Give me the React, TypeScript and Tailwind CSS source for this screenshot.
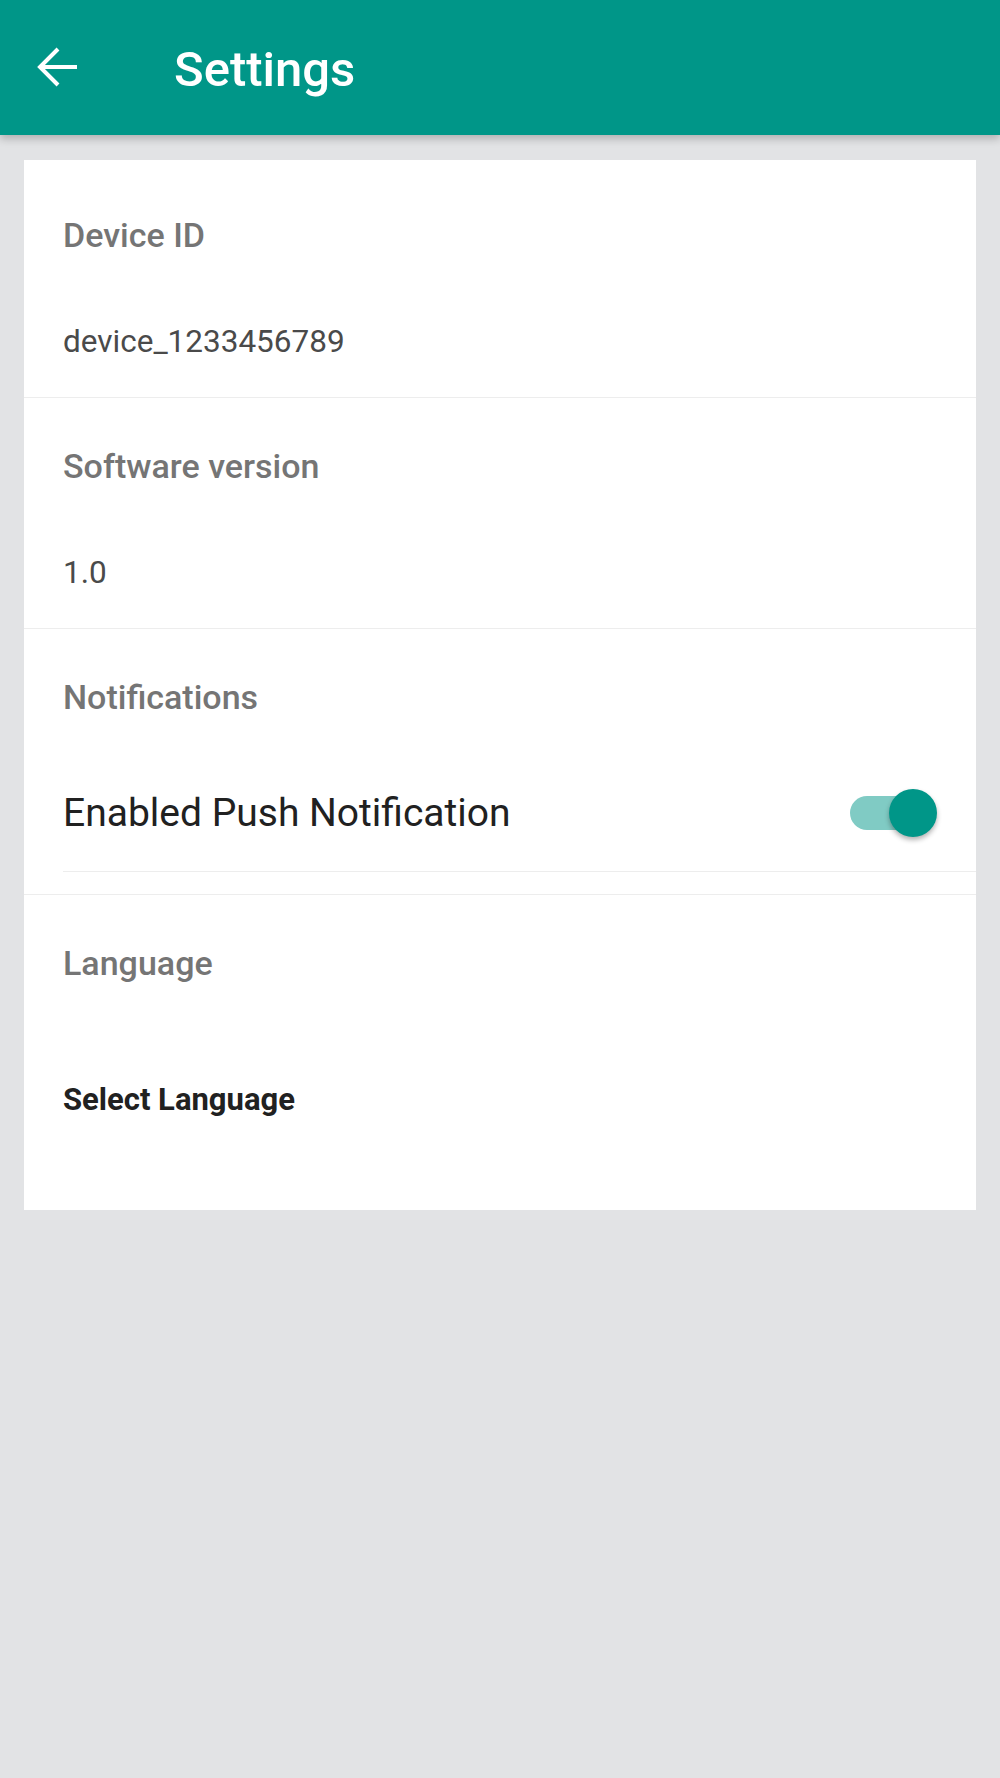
import React from "react";

function BackArrow() {
  return (
    <svg width="42" height="42" viewBox="0 0 42 42" fill="none" stroke="white" strokeWidth="4">
      <path d="M3 20H40" />
      <path d="M21 2L3 20L21 38" />
    </svg>
  );
}

function InfoSection({ label, value }: { label: string; value: string }) {
  return (
    <div className="pl-[39px] pr-[39px] pt-[48px] pb-[35px] border-b border-[#ededed]">
      <div className="text-[34px] leading-[40px] font-medium text-[#757575]">{label}</div>
      <div className="mt-[67px] text-[31.5px] leading-[40px] text-[#4a4a4a]">{value}</div>
    </div>
  );
}

function Toggle({ on }: { on: boolean }) {
  return (
    <div className="relative w-[87px] h-[48px] shrink-0">
      <div className={"absolute left-0 top-[7px] h-[34px] w-[76px] rounded-full " + (on ? "bg-[#80cbc4]" : "bg-[#bdbdbd]")} />
      <div className="absolute right-0 top-0 h-[48px] w-[48px] rounded-full bg-[#009688] shadow-[0_3px_5px_rgba(0,0,0,0.3)]" />
    </div>
  );
}

export default function App() {
  return (
    <div className="min-h-[1778px] bg-[#e2e3e5]" style={{ fontFamily: "Roboto, 'Noto Sans', sans-serif" }}>
      <header className="relative z-10 h-[135px] bg-[#009688] flex items-center pl-[37px] shadow-[0_4px_8px_rgba(0,0,0,0.22)]">
        <BackArrow />
        <h1 className="ml-[95px] mt-[4px] text-[49px] font-medium text-white">Settings</h1>
      </header>

      <div className="mx-[24px] mt-[25px] bg-white pt-[7px]">
        <InfoSection label="Device ID" value="device_1233456789" />
        <InfoSection label="Software version" value="1.0" />

        <div className="pb-[22px] border-b border-[#ededed]">
          <div className="ml-[39px] pr-[39px] pt-[48px] pb-[30px] border-b border-[#ededed]">
            <div className="text-[34px] leading-[40px] font-medium text-[#757575]">Notifications</div>
            <div className="mt-[68px] h-[56px] flex items-center justify-between">
              <span className="text-[39px] text-[#212121]">Enabled Push Notification</span>
              <Toggle on />
            </div>
          </div>
        </div>

        <div className="pl-[39px] pr-[39px] pt-[48px] pb-[90px]">
          <div className="text-[34px] leading-[40px] font-medium text-[#757575]">Language</div>
          <div className="mt-[97px] text-[31px] leading-[40px] font-bold text-[#212121]">Select Language</div>
        </div>
      </div>
    </div>
  );
}
